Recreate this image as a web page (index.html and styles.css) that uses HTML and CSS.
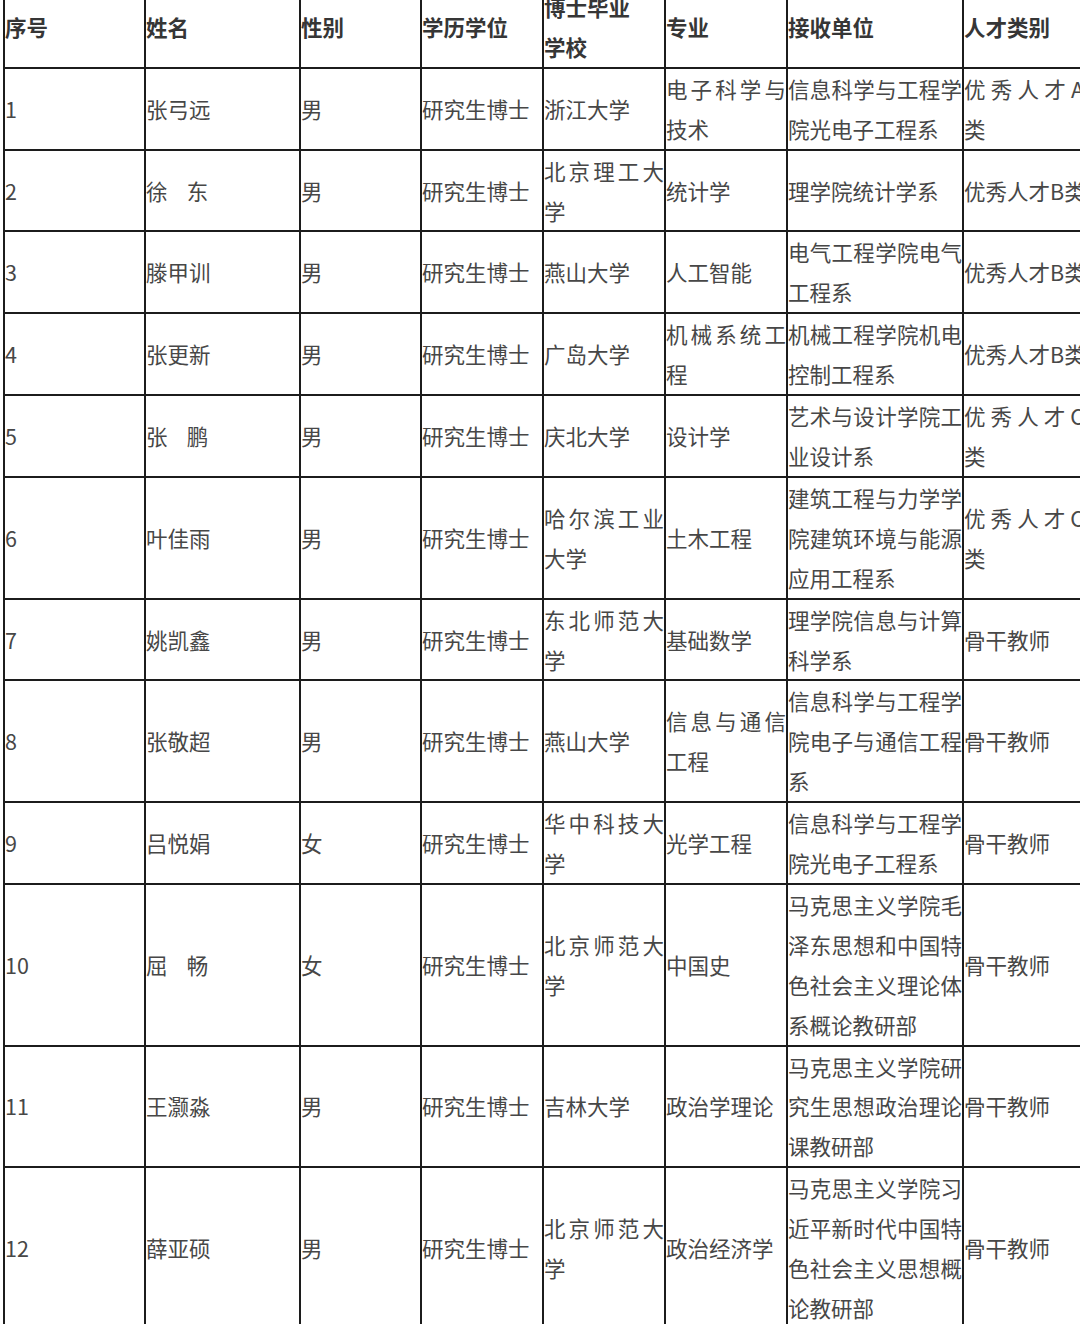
FILE: index.html
```html
<!DOCTYPE html>
<html lang="zh-CN">
<head>
<meta charset="utf-8">
<title>人才引进名单</title>
<link rel="stylesheet" href="styles.css">
</head>
<body>
<table class="list">
  <colgroup>
    <col class="c-no">
    <col class="c-name">
    <col class="c-sex">
    <col class="c-deg">
    <col class="c-school">
    <col class="c-major">
    <col class="c-unit">
    <col class="c-type">
  </colgroup>
  <thead>
    <tr>
      <th>序号</th><th>姓名</th><th>性别</th><th>学历学位</th><th>博士毕业<br>学校</th><th>专业</th><th>接收单位</th><th>人才类别</th>
    </tr>
  </thead>
  <tbody>
    <tr><td>1</td><td>张弓远</td><td>男</td><td>研究生博士</td><td>浙江大学</td><td>电子科学与技术</td><td>信息科学与工程学院光电子工程系</td><td>优秀人才A类</td></tr>
    <tr><td>2</td><td>徐&nbsp;&nbsp;&nbsp;&nbsp;东</td><td>男</td><td>研究生博士</td><td>北京理工大学</td><td>统计学</td><td>理学院统计学系</td><td class="nw">优秀人才B类</td></tr>
    <tr><td>3</td><td>滕甲训</td><td>男</td><td>研究生博士</td><td>燕山大学</td><td>人工智能</td><td>电气工程学院电气工程系</td><td class="nw">优秀人才B类</td></tr>
    <tr><td>4</td><td>张更新</td><td>男</td><td>研究生博士</td><td>广岛大学</td><td>机械系统工程</td><td>机械工程学院机电控制工程系</td><td class="nw">优秀人才B类</td></tr>
    <tr><td>5</td><td>张&nbsp;&nbsp;&nbsp;&nbsp;鹏</td><td>男</td><td>研究生博士</td><td>庆北大学</td><td>设计学</td><td>艺术与设计学院工业设计系</td><td>优秀人才C类</td></tr>
    <tr><td>6</td><td>叶佳雨</td><td>男</td><td>研究生博士</td><td>哈尔滨工业大学</td><td>土木工程</td><td>建筑工程与力学学院建筑环境与能源应用工程系</td><td>优秀人才C类</td></tr>
    <tr><td>7</td><td>姚凯鑫</td><td>男</td><td>研究生博士</td><td>东北师范大学</td><td>基础数学</td><td>理学院信息与计算科学系</td><td>骨干教师</td></tr>
    <tr><td>8</td><td>张敬超</td><td>男</td><td>研究生博士</td><td>燕山大学</td><td>信息与通信工程</td><td>信息科学与工程学院电子与通信工程系</td><td>骨干教师</td></tr>
    <tr><td>9</td><td>吕悦娟</td><td>女</td><td>研究生博士</td><td>华中科技大学</td><td>光学工程</td><td>信息科学与工程学院光电子工程系</td><td>骨干教师</td></tr>
    <tr><td>10</td><td>屈&nbsp;&nbsp;&nbsp;&nbsp;畅</td><td>女</td><td>研究生博士</td><td>北京师范大学</td><td>中国史</td><td>马克思主义学院毛泽东思想和中国特色社会主义理论体系概论教研部</td><td>骨干教师</td></tr>
    <tr><td>11</td><td>王灏淼</td><td>男</td><td>研究生博士</td><td>吉林大学</td><td>政治学理论</td><td>马克思主义学院研究生思想政治理论课教研部</td><td>骨干教师</td></tr>
    <tr><td>12</td><td>薛亚硕</td><td>男</td><td>研究生博士</td><td>北京师范大学</td><td>政治经济学</td><td>马克思主义学院习近平新时代中国特色社会主义思想概论教研部</td><td>骨干教师</td></tr>
  </tbody>
</table>
</body>
</html>
```

FILE: styles.css
```css
html {
  overflow: hidden;
  background: #fff;
}

body {
  margin: 0;
  background: #fff;
  font-family: "Noto Sans CJK SC", "Noto Sans", sans-serif;
  font-size: 21.5px;
  color: #474747;
}

.list {
  margin: -15px 0 0 3px;
  width: 1083px;
  table-layout: fixed;
  border-collapse: collapse;
}

.c-no { width: 141px; }
.c-name { width: 155px; }
.c-sex { width: 121px; }
.c-deg { width: 122px; }
.c-school { width: 122px; }
.c-major { width: 122px; }
.c-unit { width: 176px; }
.c-type { width: 122px; }

.list th,
.list td {
  border: 2px solid #1c1c1c;
  padding: 0;
  line-height: 39.9px;
  height: 79.8px;
  vertical-align: middle;
  text-align: left;
  word-break: break-all;
}

.list th {
  font-weight: 700;
  color: #363636;
}

.list td {
  text-align: justify;
}

.list td.nw {
  white-space: nowrap;
}
```
